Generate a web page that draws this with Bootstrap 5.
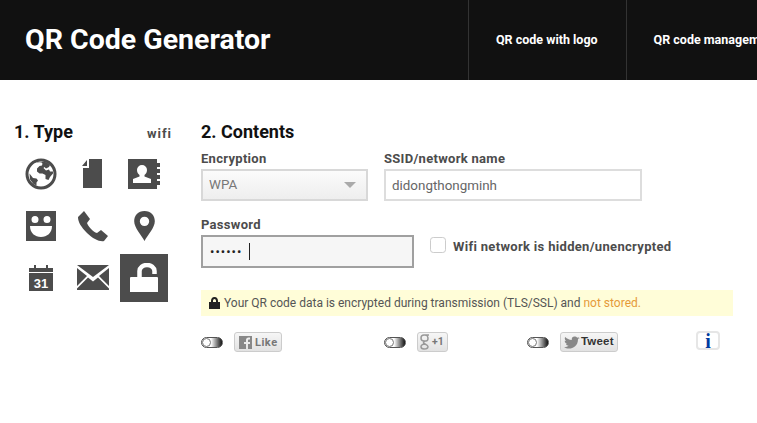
<!DOCTYPE html>
<html lang="en">
<head>
    <meta charset="UTF-8">
    <meta name="viewport" content="width=device-width, initial-scale=1.0">
    <link rel="stylesheet" href="https://cdn.jsdelivr.net/npm/bootstrap@5.3.3/dist/css/bootstrap.min.css">
    <script src="https://cdn.jsdelivr.net/npm/bootstrap@5.3.3/dist/js/bootstrap.bundle.min.js"></script>
    <title>QR Code Generator</title>
    <style>
        html, body {
            height: 100%;
            overflow: hidden;
        }

        body {
            background: #fff;
            color: #4c4c4c;
            font-family: Roboto, "Liberation Sans", sans-serif;
            font-size: 13px;
        }

        .top-bar {
            height: 80px;
            background: #111;
            padding: 0;
            flex-wrap: nowrap;
            overflow: hidden;
            justify-content: flex-start;
        }

        .top-bar .navbar-brand {
            width: 468px;
            flex-shrink: 0;
            margin: 0;
            padding: 0 0 0 25px;
            color: #fff;
            font-size: 28.500px;
            font-weight: 700;
        }

        .top-bar .navbar-nav {
            flex-direction: row;
            height: 80px;
            flex-shrink: 0;
        }

        .top-bar .nav-link {
            display: flex;
            align-items: center;
            height: 80px;
            padding: 0 28px 0 27px;
            border-left: 1px solid #333;
            color: #fff;
            font-size: 12.500px;
            font-weight: 700;
            white-space: nowrap;
        }

        .page-wrap {
            padding: 41px 0 0 14px;
        }

        .type-col {
            width: 157px;
            flex-shrink: 0;
        }

        .step-title {
            margin: 0;
            color: #111;
            font-size: 18px;
            font-weight: 700;
            line-height: 22px;
        }

        .contents-title {
            margin-bottom: 7px;
        }

        .type-name {
            font-size: 13px;
            font-weight: 700;
            letter-spacing: 1px;
            margin-right: -1px;
        }

        .type-grid {
            display: grid;
            grid-template-columns: repeat(3, 48px);
            gap: 4px 3.500px;
            margin: 6px 0 0 3px;
        }

        .type-cell {
            display: flex;
            align-items: center;
            justify-content: center;
            height: 48px;
            fill: #4c4c4c;
        }

        .type-cell.picked {
            background: #4c4c4c;
            fill: #fff;
        }

        .contents-col {
            width: 532px;
            margin-left: 30px;
        }

        .field-label {
            display: block;
            margin: 0 0 2px;
            font-size: 13px;
            font-weight: 700;
            line-height: 17px;
            letter-spacing: .3px;
        }

        .field-box {
            height: 32px;
            padding: 0 6px;
            border: 2px solid #ddd;
            border-radius: 0;
            background-color: #fff;
            color: #666;
            font-size: 13.400px;
        }

        .field-box:focus {
            border-color: #ddd;
            box-shadow: none;
        }

        .enc-select {
            width: 167px;
            border-color: #d8d8d8;
            color: #777;
            background-image: url("data:image/svg+xml,%3Csvg xmlns='http://www.w3.org/2000/svg' width='12' height='6'%3E%3Cpath d='M0 0h12L6 6z' fill='%23aaa'/%3E%3C/svg%3E"), linear-gradient(#fbfbfb, #eee);
            background-repeat: no-repeat;
            background-position: right 10px center, 0 0;
            background-size: 12px 6px, 100% 100%;
        }

        .ssid-input {
            width: 258px;
        }

        .pass-row {
            margin-top: 15px;
        }

        .pass-wrap {
            position: relative;
            width: 213px;
        }

        .pass-input {
            height: 33px;
            padding-left: 7px;
            border-color: #a0a0a0;
            background: #f6f6f6;
            color: #222;
            font-size: 13px;
            letter-spacing: 1px;
        }

        .pass-input:focus {
            border-color: #a0a0a0;
            background: #f6f6f6;
        }

        .pass-caret {
            position: absolute;
            left: 48px;
            top: 8px;
            width: 1px;
            height: 17px;
            background: #222;
        }

        .check-wrap {
            margin-top: 21px;
            gap: 7px;
        }

        .hidden-check {
            width: 16px;
            height: 16px;
            margin: 0;
            border: 1px solid #ccc;
            border-radius: 0;
        }

        .hidden-label {
            font-weight: 700;
            letter-spacing: .32px;
        }

        .secure-note {
            height: 26px;
            margin-top: 22px;
            padding-left: 8px;
            background: #fffdd8;
            color: #555;
            font-size: 12px;
        }

        .secure-note em {
            color: #e59a3a;
            font-style: normal;
        }

        .share-row {
            height: 22px;
            margin-top: 15px;
        }

        .share-slot {
            gap: 11px;
        }

        .slot-a { width: 183px; }
        .slot-b { width: 143px; }
        .slot-c { width: 169px; }

        .switch-pill {
            position: relative;
            width: 22px;
            height: 11px;
            border-radius: 6px;
            background: linear-gradient(to right, #fff 45%, #111);
            border: 1px solid #555;
        }

        .switch-pill::before {
            content: "";
            position: absolute;
            left: 0;
            top: 0;
            width: 9px;
            height: 9px;
            border-radius: 50%;
            background: #fff;
            border: 1px solid #777;
        }

        .share-btn {
            display: flex;
            align-items: center;
            gap: 3px;
            height: 20px;
            padding: 0 3px 0 4px;
            border: 1px solid #ccc;
            border-radius: 3px;
            background: linear-gradient(#f6f6f6, #e2e2e2);
            color: #777;
            font-size: 11px;
            font-weight: 700;
            line-height: 1;
            letter-spacing: .5px;
        }

        .plus-btn {
            gap: 1px;
            padding: 0 3px 0 2px;
            font-size: 10.500px;
            letter-spacing: 0;
        }

        .tweet-btn {
            gap: 1px;
            padding: 0 3px;
        }

        .tweet-text {
            color: #333;
            font-family: "Liberation Sans", sans-serif;
            font-size: 11.500px;
            letter-spacing: .2px;
        }

        .info-btn {
            display: flex;
            align-items: center;
            justify-content: center;
            width: 24px;
            height: 19px;
            margin-top: -3px;
            border: 2px solid #e6e6e6;
            border-radius: 4px;
            color: #003a9e;
            font-family: "Liberation Serif", serif;
            font-size: 20px;
            font-weight: 700;
            line-height: 1;
            background: #fff;
        }
    </style>
</head>
<body>

    <nav class="navbar top-bar">
        <a class="navbar-brand" href="#">QR Code Generator</a>
        <div class="navbar-nav">
            <a class="nav-link" href="#">QR code with logo</a>
            <a class="nav-link" href="#">QR code management</a>
        </div>
    </nav>

    <div class="d-flex page-wrap">
        <div class="type-col">
            <div class="d-flex justify-content-between align-items-baseline">
                <h2 class="step-title">1. Type</h2>
                <span class="type-name">wifi</span>
            </div>
            <div class="type-grid">
                <div class="type-cell">
                    <svg width="32" height="32" viewBox="0 0 32 32"><path fill-rule="evenodd" d="M16 .500a15.500 15.500 0 1 0 0 31 15.500 15.500 0 0 0 0-31zM16 3.500a12.500 12.500 0 1 1 0 25 12.500 12.500 0 0 1 0-25z"/><path d="M10 4.500l3.500-1 2 1 3-1 3.500 1 3 2.500-1 2-3 1.500-1.500-1.500-1 1 2.500 2.500 3-1 1 2 3 0 0 2-3 3.500-1.500 3-3-1 0-4-3-1.500-3 0-2.500-2 0-3 2.500-2.500 2.500-.5 .5-2-2-1.500-3 .5-1-1zM4.500 15.500l3.500 4.500 3.500 .5 1.500 2-1.500 2 0 3-3-1.500-3.500-4.500z"/></svg>
                </div>
                <div class="type-cell">
                    <svg width="22" height="30" viewBox="0 0 22 30"><path d="M7 0h13v29H1V9h6zM5 1v6H0z"/></svg>
                </div>
                <div class="type-cell">
                    <svg width="32" height="32" viewBox="0 0 32 32"><path fill-rule="evenodd" d="M0 1h29v30H0zM14 7a5 5 0 0 0-5 5c0 2 1 4 2.500 5v1.500L5 21v4h18v-4l-6.500-2.500V17c1.500-1 2.500-3 2.500-5a5 5 0 0 0-5-5zM29 5h3v4h-3zM29 11h3v4h-3zM29 17h3v4h-3zM29 23h3v4h-3z"/></svg>
                </div>
                <div class="type-cell">
                    <svg width="30" height="30" viewBox="0 0 30 30"><path fill-rule="evenodd" d="M0 0h30v30H0zM9 5a3.500 3.500 0 1 0 0 7 3.500 3.500 0 0 0 0-7zM21 5a3.500 3.500 0 1 0 0 7 3.500 3.500 0 0 0 0-7zM4 15c0 7 5 11 11 11s11-4 11-11z"/></svg>
                </div>
                <div class="type-cell">
                    <svg width="32" height="32" viewBox="0 0 32 32"><path d="M7 1l6 8-3 4c1 3 6 9 10 10l4-3 7 6-4 5c-4 1-11-2-17-8S1 12 1 7z"/></svg>
                </div>
                <div class="type-cell">
                    <svg width="23" height="30" viewBox="0 0 24 32"><path fill-rule="evenodd" d="M12 0C5 0 1 5 1 11c0 7 8 15 11 21 3-6 11-14 11-21C23 5 19 0 12 0zM12 6a5 5 0 1 1 0 10 5 5 0 0 1 0-10z"/></svg>
                </div>
                <div class="type-cell">
                    <svg width="24" height="26" viewBox="0 0 24 26"><path fill-rule="evenodd" d="M0 3h5V0h2v3h10V0h2v3h5v4H0zM0 8h24v18H0z"/><text x="12" y="22.500" text-anchor="middle" fill="#fff" font-family="Liberation Sans" font-weight="700" font-size="13">31</text></svg>
                </div>
                <div class="type-cell">
                    <svg width="32" height="25" viewBox="0 0 32 25"><path d="M0 0h32L16 12zM0 3l10 8L0 21zM32 3v18L22 11zM11 12.500l5 4 5-4 11 11V25H0v-1.500z"/></svg>
                </div>
                <div class="type-cell picked">
                    <svg width="28" height="29" viewBox="0 0 28 29"><path d="M1 14h26a1 1 0 0 1 1 1v14H0V15a1 1 0 0 1 1-1z"/><path fill="none" stroke="#fff" stroke-width="4.500" d="M9.500 15V8a7.500 6 0 0 1 15 0v3"/></svg>
                </div>
            </div>
        </div>

        <div class="contents-col">
            <h2 class="step-title contents-title">2. Contents</h2>
            <div class="d-flex gap-3">
                <div>
                    <label class="field-label" for="enc">Encryption</label>
                    <select id="enc" class="form-select field-box enc-select"><option>WPA</option></select>
                </div>
                <div>
                    <label class="field-label" for="ssid">SSID/network name</label>
                    <input id="ssid" class="form-control field-box ssid-input" type="text" value="didongthongminh">
                </div>
            </div>
            <div class="d-flex gap-3 pass-row">
                <div>
                    <label class="field-label" for="pass">Password</label>
                    <div class="pass-wrap">
                        <input id="pass" class="form-control field-box pass-input" type="password" value="123456">
                        <span class="pass-caret"></span>
                    </div>
                </div>
                <div class="d-flex align-items-start check-wrap">
                    <input id="hidden" class="form-check-input hidden-check" type="checkbox">
                    <label class="form-check-label hidden-label" for="hidden">Wifi network is hidden/unencrypted</label>
                </div>
            </div>
            <div class="d-flex align-items-center gap-1 secure-note">
                <svg width="11" height="12" viewBox="0 0 11 12"><path fill="#222" fill-rule="evenodd" d="M5.500 0C3 0 2 1.700 2 4v1H0v7h11V5H9V4C9 1.700 8 0 5.500 0zM5.500 2C6.600 2 7 3 7 4v1H4V4c0-1 .4-2 1.500-2z"/></svg>
                <span>Your QR code data is encrypted during transmission (TLS/SSL) and <em>not stored.</em></span>
            </div>
            <div class="d-flex align-items-center share-row">
                <div class="d-flex align-items-center share-slot slot-a">
                    <span class="switch-pill"></span>
                    <span class="share-btn"><svg width="13" height="13" viewBox="0 0 13 13"><path fill="#888" d="M0 0h13v13H9V8h2V6H9V4.500c0-.6.4-1 1-1h1V1.500H9.500C8 1.500 7 2.500 7 4v2H5v2h2v5H0z"/></svg>Like</span>
                </div>
                <div class="d-flex align-items-center share-slot slot-b">
                    <span class="switch-pill"></span>
                    <span class="share-btn plus-btn"><svg width="11" height="16" viewBox="0 0 11 16"><path fill="none" stroke="#999" stroke-width="1.500" d="M9 1H4C2 1 1 2.500 1 4s1 3 3 3h2c2 0 2-2 2-3S7 1 5 1M5 7c-2 1-2 2 0 3s3 1.500 3 2.500S7 15 4 15s-3-2-3-2.500S2 10 5 10"/></svg>+1</span>
                </div>
                <div class="d-flex align-items-center share-slot slot-c">
                    <span class="switch-pill"></span>
                    <span class="share-btn tweet-btn"><svg width="16" height="13" viewBox="0 0 16 13"><path fill="#888" d="M16 2l-2 .5 1.500-1.500-2 .7C12.500.8 11.500.5 10.500.5 8.500.5 7.500 2 7.800 4 5 3.800 3 2.700 1.200 1 .4 2.500.8 4 2 5L.7 4.700c0 1.500 1 2.500 2.500 3l-1.400.1c.5 1.200 1.400 1.900 2.800 2C3.400 10.800 2 11.300 0 11.200c5 3 14 1 14-8z"/></svg><span class="tweet-text">Tweet</span></span>
                </div>
                <span class="info-btn">i</span>
            </div>
        </div>
    </div>

</body>
</html>
